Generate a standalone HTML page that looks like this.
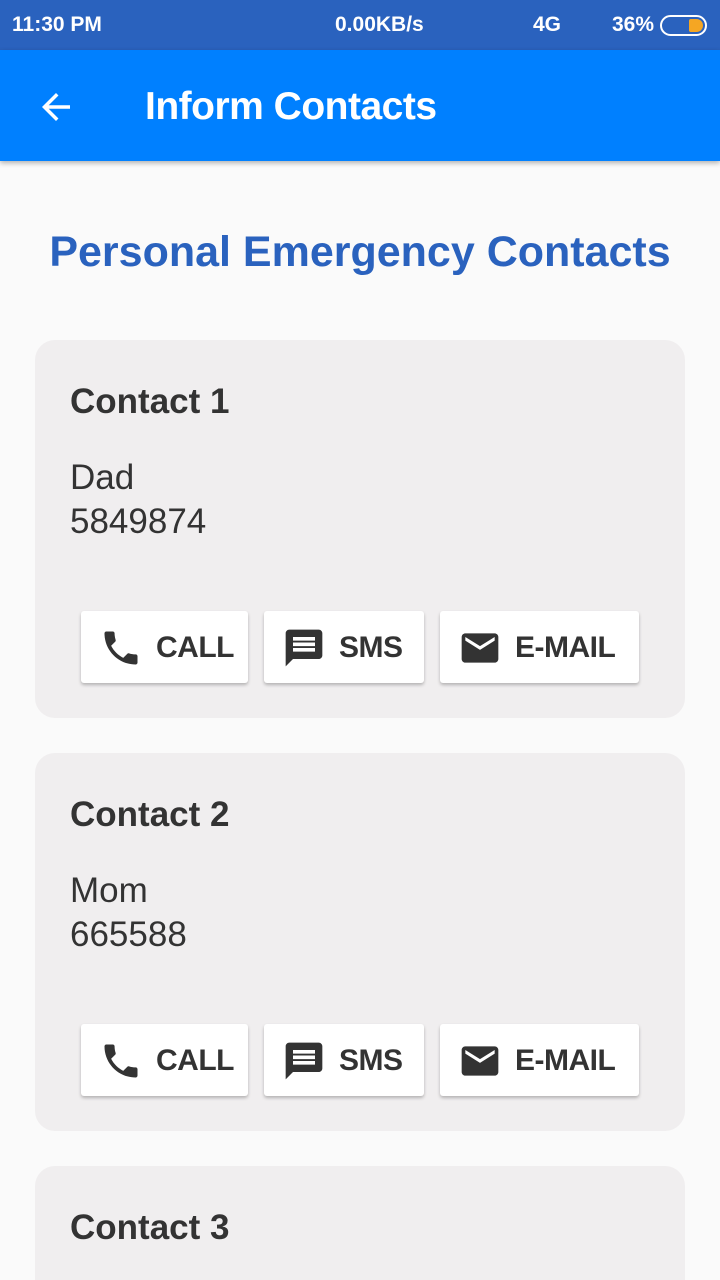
<!DOCTYPE html>
<html><head><meta charset="utf-8"><style>
*{margin:0;padding:0;box-sizing:border-box}
html,body{width:720px;height:1280px;overflow:hidden}
body{background:#fafafa;font-family:"Liberation Sans",Roboto,sans-serif;position:relative}
.sb{position:absolute;top:0;left:0;width:720px;height:50px;background:#2a62be;color:#fff;font-weight:bold;font-size:21px}
.ab{position:absolute;top:50px;left:0;width:720px;height:111px;background:#0080ff;box-shadow:0 2px 5px rgba(0,0,0,.3)}
.ab .t{position:absolute;left:145px;top:35px;color:#fff;font-size:39px;font-weight:bold;letter-spacing:-0.5px}
h1{position:absolute;top:228px;width:720px;text-align:center;color:#2a62be;font-size:43px;font-weight:bold}
.card{position:absolute;left:35px;width:650px;height:378px;background:#f0eeef;border-radius:20px}
.card .h{position:absolute;left:35px;top:42px;font-size:35px;font-weight:bold;color:#333}
.card .d{position:absolute;left:35px;top:116px;font-size:35px;line-height:44px;color:#333}
.btn{position:absolute;top:271px;height:72px;background:#fff;border-radius:3px;box-shadow:0 2px 3px rgba(0,0,0,.25);font-weight:bold;font-size:30px;color:#333}
.btn svg{position:absolute;left:18px;top:15px}
.btn span{position:absolute;top:20px;letter-spacing:-0.5px}
</style></head><body>
<div class="sb"><span style="position:absolute;left:12px;top:13px">11:30 PM</span>
<span style="position:absolute;left:335px;top:13px">0.00KB/s</span>
<span style="position:absolute;left:533px;top:13px">4G</span>
<span style="position:absolute;left:612px;top:13px">36%</span>
<div style="position:absolute;left:660px;top:15px;width:47px;height:21px;border:2px solid #fff;border-radius:11px"><div style="position:absolute;right:2px;top:2px;width:14px;height:13px;background:#f5a623;border-radius:2px 7px 7px 2px"></div></div>
</div>
<div class="ab"><svg style="position:absolute;left:35px;top:36px" width="42" height="42" viewBox="0 0 24 24"><path fill="#fff" d="M20 11H7.83l5.59-5.59L12 4l-8 8 8 8 1.41-1.41L7.83 13H20v-2z"/></svg><div class="t">Inform Contacts</div></div>
<h1>Personal Emergency Contacts</h1>
<div class="card" style="top:340px"><div class="h">Contact 1</div><div class="d">Dad<br>5849874</div>
<div class="btn" style="left:46px;width:167px"><svg width="44" height="44" viewBox="0 0 24 24"><path fill="#333" d="M6.62 10.79c1.44 2.83 3.76 5.14 6.59 6.59l2.2-2.2c.27-.27.67-.36 1.02-.24 1.120.37 2.33.57 3.57.57.55 0 1 .45 1 1V20c0 .55-.45 1-1 1-9.39 0-17-7.61-17-17 0-.55.45-1 1-1h3.5c.55 0 1 .45 1 1 0 1.25.2 2.45.57 3.57.11.35.03.74-.25 1.02l-2.2 2.2z"/></svg><span style="left:75px">CALL</span></div>
<div class="btn" style="left:229px;width:160px"><svg width="44" height="44" viewBox="0 0 24 24"><path fill="#333" d="M20 2H4c-1.1 0-2 .9-2 2v18l4-4h14c1.1 0 2-.9 2-2V4c0-1.1-.9-2-2-2zM18 14H6v-2h12v2zm0-3H6V9h12v2zm0-3H6V6h12v2z"/></svg><span style="left:75px">SMS</span></div>
<div class="btn" style="left:405px;width:199px"><svg width="44" height="44" viewBox="0 0 24 24"><path fill="#333" d="M20 4H4c-1.1 0-2 .9-2 2v12c0 1.1.9 2 2 2h16c1.1 0 2-.9 2-2V6c0-1.1-.9-2-2-2zm0 4l-8 5-8-5V6l8 5 8-5v2z"/></svg><span style="left:75px">E-MAIL</span></div>
</div>
<div class="card" style="top:753px"><div class="h">Contact 2</div><div class="d">Mom<br>665588</div>
<div class="btn" style="left:46px;width:167px"><svg width="44" height="44" viewBox="0 0 24 24"><path fill="#333" d="M6.62 10.79c1.44 2.83 3.76 5.14 6.59 6.59l2.2-2.2c.27-.27.67-.36 1.02-.24 1.12.37 2.33.57 3.57.57.55 0 1 .45 1 1V20c0 .55-.45 1-1 1-9.39 0-17-7.61-17-17 0-.55.45-1 1-1h3.5c.55 0 1 .45 1 1 0 1.25.2 2.45.57 3.57.11.35.03.74-.25 1.02l-2.2 2.2z"/></svg><span style="left:75px">CALL</span></div>
<div class="btn" style="left:229px;width:160px"><svg width="44" height="44" viewBox="0 0 24 24"><path fill="#333" d="M20 2H4c-1.1 0-2 .9-2 2v18l4-4h14c1.1 0 2-.9 2-2V4c0-1.1-.9-2-2-2zM18 14H6v-2h12v2zm0-3H6V9h12v2zm0-3H6V6h12v2z"/></svg><span style="left:75px">SMS</span></div>
<div class="btn" style="left:405px;width:199px"><svg width="44" height="44" viewBox="0 0 24 24"><path fill="#333" d="M20 4H4c-1.1 0-2 .9-2 2v12c0 1.1.9 2 2 2h16c1.1 0 2-.9 2-2V6c0-1.1-.9-2-2-2zm0 4l-8 5-8-5V6l8 5 8-5v2z"/></svg><span style="left:75px">E-MAIL</span></div>
</div>
<div class="card" style="top:1166px;height:114px;border-radius:20px 20px 0 0"><div class="h">Contact 3</div></div>
</body></html>
